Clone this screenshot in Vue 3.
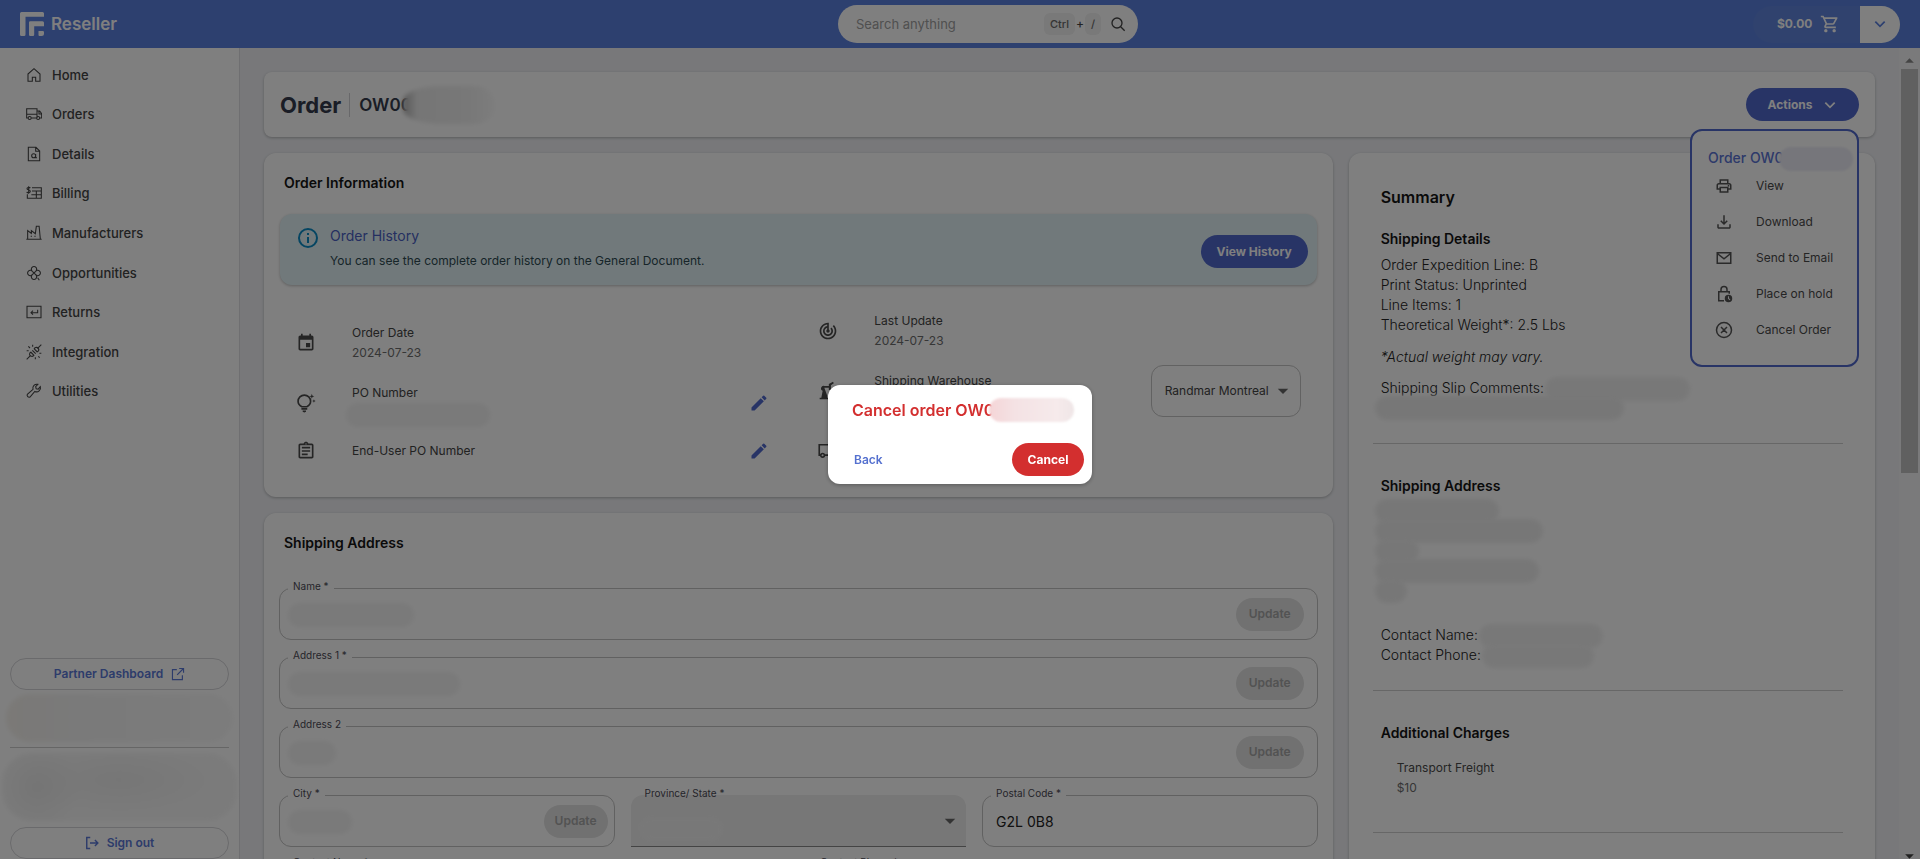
<script setup>
import { h, ref } from 'vue'

const fills = {
  event: 'M17 12h-5v5h5v-5zM16 1v2H8V1H6v2H5c-1.11 0-1.99.9-1.99 2L3 19c0 1.1.89 2 2 2h14c1.1 0 2-.9 2-2V5c0-1.1-.9-2-2-2h-1V1h-2zm3 18H5V8h14v11z',
  edit: 'M3 17.25V21h3.75L17.81 9.94l-3.75-3.75L3 17.25zM20.71 7.04c.39-.39.39-1.02 0-1.41l-2.34-2.34a1 1 0 0 0-1.41 0l-1.83 1.83 3.75 3.75 1.83-1.83z',
  clipboard: 'M7 15h7v2H7zm0-4h10v2H7zm0-4h10v2H7zM19 3h-4.18C14.4 1.84 13.3 1 12 1s-2.4.84-2.82 2H5c-1.1 0-2 .9-2 2v14c0 1.1.9 2 2 2h14c1.1 0 2-.9 2-2V5c0-1.1-.9-2-2-2zm-7-.25c.41 0 .75.34.75.75s-.34.75-.75.75-.75-.34-.75-.75.34-.75.75-.75zM19 19H5V5h14v14z',
  track: 'M19.07 4.93l-1.41 1.41C19.1 7.79 20 9.79 20 12c0 4.42-3.58 8-8 8s-8-3.58-8-8c0-4.08 3.05-7.44 7-7.93v2.02C8.16 6.57 6 9.03 6 12c0 3.31 2.69 6 6 6s6-2.69 6-6c0-1.66-.67-3.16-1.76-4.24l-1.41 1.41C15.55 9.9 16 10.9 16 12c0 2.21-1.79 4-4 4s-4-1.79-4-4c0-1.86 1.28-3.41 3-3.86v2.14c-.6.35-1 .98-1 1.72 0 1.1.9 2 2 2s2-.9 2-2c0-.74-.4-1.38-1-1.72V2h-1C6.48 2 2 6.48 2 12s4.48 10 10 10 10-4.48 10-10c0-2.76-1.12-5.26-2.93-7.07z',
  print: 'M19 8h-1V3H6v5H5c-1.66 0-3 1.34-3 3v6h4v4h12v-4h4v-6c0-1.66-1.34-3-3-3zM8 5h8v3H8V5zm8 12v2H8v-4h8v2zm2-2v-2H6v2H4v-4c0-.55.45-1 1-1h14c.55 0 1 .45 1 1v4h-2zM17 10.5h2v2h-2z',
  download: 'M19 15v4H5v-4H3v4c0 1.1.9 2 2 2h14c1.1 0 2-.9 2-2v-4h-2zM17 11l-1.41-1.41L13 12.17V3h-2v9.17L8.41 9.59 7 11l5 5 5-5z',
  cart: 'M15.55 13c.75 0 1.41-.41 1.75-1.03l3.58-6.49A1 1 0 0 0 20.01 4H5.21l-.94-2H1v2h2l3.6 7.59-1.35 2.44C4.52 15.37 5.48 17 7 17h12v-2H7l1.1-2h7.45zM6.16 6h12.15l-2.76 5H8.53L6.16 6zM7 18c-1.1 0-1.99.9-1.99 2S5.9 22 7 22s2-.9 2-2-.9-2-2-2zm10 0c-1.1 0-1.99.9-1.99 2s.89 2 1.99 2 2-.9 2-2-.9-2-2-2z',
  robot: 'M2 22v-2h2l1.6-8.3A3 3 0 1 1 7.8 6H13v2H7.6l3.4 9.5V20h2v2H2zM13 3.5l5-2.5 1 1.8L15.500 5v4L19 11.200l-1 1.800-5-2.500z',
  bulb: 'M6.500 18h7v2h-7zM8 21h4v1.500l-2 1-2-1zM19 1l.8 2.200L22 4l-2.200.8L19 7l-.8-2.200L16 4l2.200-.8zM21.500 7.500l.6 1.500 1.500.6-1.500.6-.6 1.500-.6-1.500-1.500-.6 1.500-.6z',
  lock: 'M18 13a5 5 0 1 0 0 10 5 5 0 0 0 0-10zm1.700 7.200-2.400-2V15h1.300v2.600l1.900 1.600z',
  caret: 'M5 9h14l-7 7z',
  up: 'M4 16h16l-8-8z',
  info: 'M11 7h2v2h-2zm0 4h2v6h-2z',
  logo: 'M1.500 0H22.500A1.500 1.500 0 0 1 24 1.500V4.700H5.500V22.500A1.500 1.500 0 0 1 4 24H1.500A1.500 1.500 0 0 1 0 22.500V1.500A1.500 1.500 0 0 1 1.500 0zM10.300 9.300H22.500A1.500 1.500 0 0 1 24 10.800V14.200H14.200V22.800A1.200 1.200 0 0 1 13 24H10.200A1.200 1.200 0 0 1 9 22.800V10.600A1.300 1.300 0 0 1 10.300 9.300zM18.500 19H22.800A1.200 1.200 0 0 1 24 20.200V21.500A2.500 2.500 0 0 1 21.500 24H19.500A1 1 0 0 1 18.500 23z'
}
const strokes = {
  home: 'M3 10.500 12 2.500l9 8V21.500h-6.500v-6h-5v6H3z',
  van: 'M4 17H1.500V4.500h14V17H8M15.500 8.500h4l3 4V17H21M5.500 15a2.200 2.200 0 1 0 0 4.400 2.200 2.200 0 0 0 0-4.400zM18.200 15a2.200 2.200 0 1 0 0 4.400 2.200 2.200 0 0 0 0-4.400zM15.500 17h1',
  truck: 'M3 18H1V4h15.500v14M8 18h8M1 12.500h15.500M16.500 7.500h4l3 4V18H21M19.500 8v4h4M5.500 15.700a2.300 2.300 0 1 0 0 4.600 2.300 2.300 0 0 0 0-4.600zM18.200 15.700a2.300 2.300 0 1 0 0 4.600 2.300 2.300 0 0 0 0-4.600z',
  details: 'M3.500 2h11.500l5.500 5.500V22H3.500zM14.500 2.500v5.500h5.500M11.500 11.500a3 3 0 1 0 0 6 3 3 0 0 0 0-6zM14.500 12v5.500h2',
  billing: 'M9 4h14v16H2v-6M9 9h14M8 14.500h15M15.500 9v11M6.500 4.500C5 3 1.500 3.500 1.500 5.500S6.500 7 6.500 9.500 2.500 12 1 10.500M4 2v11',
  factory: 'M.5 21.500h23M2.500 21V8.500l5.500 4v-4l6 4.500L15.500 2h4.200l1.800 19M7 17h2M12.500 17h2',
  clover: 'M9.500 9.500A4 4 0 1 1 14.500 9.500 4 4 0 1 1 14.500 14.500 4 4 0 1 1 9.500 14.500 4 4 0 1 1 9.500 9.500L14.500 14.500M14.500 9.500L9.500 14.500M17.500 19l2.500 4',
  returns: 'M1.500 3.500h21v17h-21zM17.500 8.500V13H7.500M10.500 10l-3 3 3 3',
  plug: 'M1 23l6-6M17 7l6-6M7 12l5 5M12 7l5 5M9.500 9.500l5 5M7 12c-2.500 2.500-2 5 0 6s4 .5 5.500-1.500M12 7c2-2.500 5-2.500 6.500-.5s.5 4-1.500 5.500M6 6 3.500 3.500M10 4V1M1 10h3M14 20v3M20 14h3M18.500 18.500l2 2',
  wrench: 'M21.500 5.500a6 6 0 0 1-8.300 7.200L6 21a3 3 0 0 1-4-4l8.500-7.500a6 6 0 0 1 7.300-7.500L14.500 5.500l.8 3.200 3 .6z',
  external: 'M10 4.500H2.500v17h17V14M14 2.500h7.500V10M21 3 10.500 13.500',
  signout: 'M9 2.500H3v19h6M8.500 12H22M17 7l5 5-5 5',
  search: 'M10.500 3a7.500 7.500 0 1 0 0 15 7.500 7.500 0 0 0 0-15zM16 16l6 6',
  chevron: 'M4 8l8 8 8-8',
  info: 'M12 3a9 9 0 1 0 0 18 9 9 0 0 0 0-18z',
  mail: 'M3 5h18v14H3zM3 6l9 7 9-7',
  lock: 'M12 21H5V9h14v2.500M8 9V6a4 4 0 0 1 8 0v3',
  cancel: 'M12 2a10 10 0 1 0 0 20 10 10 0 0 0 0-20zM8 8l8 8M16 8l-8 8',
  bulb: 'M7 16.500C4 15 2.500 12.500 2.500 10a7.500 7.500 0 0 1 15 0c0 2.500-1.500 5-4.500 6.500z'
}
const Icon = (p) => h('svg', { viewBox: '0 0 24 24', class: 'icon', 'aria-hidden': 'true' }, [
  fills[p.name] && h('path', { d: fills[p.name], fill: 'currentColor', 'fill-rule': 'evenodd' }),
  strokes[p.name] && h('path', { d: strokes[p.name], fill: 'none', stroke: 'currentColor', 'stroke-width': p.w || 2 })
])
Icon.props = ['name', 'w']

const nav = [
  ['home', 'Home'], ['truck', 'Orders'], ['details', 'Details'], ['billing', 'Billing'],
  ['factory', 'Manufacturers'], ['clover', 'Opportunities'], ['returns', 'Returns'],
  ['plug', 'Integration'], ['wrench', 'Utilities']
]
const menu = [
  ['print', 'View'], ['download', 'Download'], ['mail', 'Send to Email'],
  ['lock', 'Place on hold'], ['cancel', 'Cancel Order']
]
const lines = [
  { id: 'name', label: 'Name *', size: 'w126' },
  { id: 'address1', label: 'Address 1 *', size: 'w172' },
  { id: 'address2', label: 'Address 2', size: 'w48' }
]
const postal = ref('G2L 0B8')
</script>

<template>
  <div class="app">
    <header class="topbar">
      <a class="brand" href="#"><Icon name="logo" /><span>Reseller</span></a>
      <form class="search" role="search" @submit.prevent>
        <input type="search" placeholder="Search anything" aria-label="Search anything" />
        <kbd>Ctrl</kbd><span class="plus">+</span><kbd class="slash">/</kbd>
        <button type="button" aria-label="Search"><Icon name="search" /></button>
      </form>
      <div class="cart">
        <button type="button" class="total">$0.00 <Icon name="cart" /></button>
        <button type="button" class="more" aria-label="Cart options"><Icon name="chevron" w="3" /></button>
      </div>
    </header>

    <div class="body">
      <aside class="sidebar">
        <nav>
          <a v-for="[icon, label] in nav" :key="label" href="#"><Icon :name="icon" w="1.6" />{{ label }}</a>
        </nav>
        <div class="side-foot">
          <button type="button" class="outline">Partner Dashboard <Icon name="external" /></button>
          <span class="smudge side-a"></span>
          <hr />
          <span class="smudge side-b"></span>
          <button type="button" class="outline"><Icon name="signout" w="2.500" /> Sign out</button>
        </div>
      </aside>

      <main class="content">
        <section class="card title-card">
          <h1>Order</h1>
          <span class="order-no">OW00<span class="smudge title-smudge"></span></span>
          <div class="actions">
            <button type="button" class="pill primary">Actions <Icon name="chevron" w="3" /></button>
            <div class="menu">
              <h3>Order OW0<span class="smudge menu-smudge"></span></h3>
              <ul>
                <li v-for="[icon, label] in menu" :key="label">
                  <button type="button"><Icon :name="icon" />{{ label }}</button>
                </li>
              </ul>
            </div>
          </div>
        </section>

        <div class="left">
          <section class="card info">
            <h2>Order Information</h2>
            <div class="alert">
              <Icon name="info" />
              <div>
                <strong>Order History</strong>
                <p>You can see the complete order history on the General Document.</p>
              </div>
              <button type="button" class="pill primary history">View History</button>
            </div>
            <div class="facts">
              <ul>
                <li>
                  <Icon name="event" />
                  <div>Order Date<small>2024-07-23</small></div>
                </li>
                <li>
                  <Icon name="bulb" />
                  <div>PO Number<small><span class="smudge po"></span></small></div>
                  <button type="button" aria-label="Edit PO Number"><Icon name="edit" /></button>
                </li>
                <li class="short">
                  <Icon name="clipboard" />
                  <div>End-User PO Number</div>
                  <button type="button" aria-label="Edit End-User PO Number"><Icon name="edit" /></button>
                </li>
              </ul>
              <ul>
                <li>
                  <Icon name="track" />
                  <div>Last Update<small>2024-07-23</small></div>
                </li>
                <li>
                  <Icon name="robot" />
                  <div><label for="warehouse">Shipping Warehouse</label><small>&nbsp;</small></div>
                  <span class="select warehouse">
                    <select id="warehouse"><option>Randmar Montreal</option></select>
                    <Icon name="caret" />
                  </span>
                </li>
                <li>
                  <Icon name="van" />
                </li>
              </ul>
            </div>
          </section>

          <section class="card address">
            <h2>Shipping Address</h2>
            <div class="fields">
              <div v-for="f in lines" :key="f.id" class="field full">
                <label :for="f.id">{{ f.label }}</label>
                <input :id="f.id" type="text" />
                <span class="smudge over" :class="f.size"></span>
                <button type="button" class="pill update" disabled>Update</button>
              </div>
              <div class="field third city">
                <label for="city">City *</label>
                <input id="city" type="text" />
                <span class="smudge over w64"></span>
                <button type="button" class="pill update" disabled>Update</button>
              </div>
              <div class="field third filled">
                <label for="state">Province/ State *</label>
                <span class="select">
                  <select id="state"><option></option></select>
                  <Icon name="caret" />
                </span>
                <span class="smudge over state-smudge"></span>
              </div>
              <div class="field third">
                <label for="postal">Postal Code *</label>
                <input id="postal" v-model="postal" type="text" />
              </div>
              <div class="field half">
                <label for="cname">Contact Name *</label>
                <input id="cname" type="text" />
              </div>
              <div class="field half">
                <label for="cphone">Contact Phone *</label>
                <input id="cphone" type="text" />
              </div>
            </div>
          </section>
        </div>

        <section class="card summary">
          <div class="block first">
            <h2>Summary</h2>
            <h3>Shipping Details</h3>
            <p>Order Expedition Line: B<br />Print Status: Unprinted<br />Line Items: 1<br />Theoretical Weight*: 2.5 Lbs</p>
            <p class="note"><em>*Actual weight may vary.</em></p>
            <p class="slip">Shipping Slip Comments:<span class="smudge value w145"></span><br /><span class="smudge line w249"></span></p>
          </div>
          <div class="block ship">
            <h3>Shipping Address</h3>
            <div class="lines">
              <span class="smudge line w124"></span>
              <span class="smudge line w168"></span>
              <span class="smudge line w44"></span>
              <span class="smudge line w164"></span>
              <span class="smudge line w32"></span>
            </div>
            <p>Contact Name:<span class="smudge value w124"></span><br />Contact Phone:<span class="smudge value w112"></span></p>
          </div>
          <div class="block charges">
            <h3>Additional Charges</h3>
            <dl><dt>Transport Freight</dt><dd>$10</dd></dl>
          </div>
        </section>
      </main>

      <div class="scrollbar" aria-hidden="true">
        <Icon name="up" />
        <span class="thumb"></span>
        <Icon name="up" class="down" />
      </div>
    </div>

    <div class="backdrop">
      <div class="dialog" role="dialog" aria-modal="true" aria-labelledby="dlg">
        <h2 id="dlg">Cancel order OW0<span class="smudge dialog-smudge"></span></h2>
        <div class="dialog-actions">
          <button type="button" class="back">Back</button>
          <button type="button" class="pill danger">Cancel</button>
        </div>
      </div>
    </div>
  </div>
</template>

<style>
body { overflow: hidden; }
</style>

<style scoped>
* { box-sizing: border-box; margin: 0; padding: 0; }
.app { height: 100vh; display: flex; flex-direction: column; font-family: Inter, "Liberation Sans", sans-serif; font-size: 12px; line-height: 20px; color: #222; }
button, input, select { font: inherit; color: inherit; border: 0; background: none; outline: 0; }
select { appearance: none; }
ul { list-style: none; }
a { color: inherit; text-decoration: none; }
.icon { width: 20px; height: 20px; flex: none; display: block; }

.topbar { height: 48px; flex: none; background: #5b80df; display: grid; grid-template-columns: 1fr 300px 1fr; align-items: center; padding: 0 20px 0 76px; }
.brand { display: flex; align-items: center; gap: 7px; color: #fff; font-size: 17px; font-weight: 600; margin-left: -56px; }
.brand .icon { width: 24px; height: 24px; }
.search { height: 38px; border-radius: 19px; background: #fff; display: flex; align-items: center; padding: 0 12px 0 18px; }
.search input { flex: 1; min-width: 0; font-size: 13px; }
.search input::placeholder { color: #a0a0a0; opacity: 1; }
.search kbd { font: inherit; font-size: 11px; font-weight: 500; line-height: 22px; padding: 0 6px; border-radius: 6px; background: #f2f2f2; color: #6a6a6a; }
.search .plus { padding: 0 1px; color: #444; font-weight: 500; }
.search button { margin-left: 9px; color: #444; }
.search button .icon { width: 16px; height: 16px; }
.cart { justify-self: end; display: flex; height: 37px; border-radius: 19px; overflow: hidden; background: #6084dc; }
.total { width: 107px; padding-left: 24px; display: flex; align-items: center; gap: 8px; color: #fff; font-weight: 700; }
.more { width: 40px; background: #fff; color: #5b80df; display: grid; place-items: center; }
.more .icon { width: 14px; height: 14px; }

.body { flex: 1; min-height: 0; display: flex; background: #f0f1f5; }
.sidebar { width: 240px; flex: none; background: #fff; border-right: 1px solid #dfdfe2; display: flex; flex-direction: column; justify-content: space-between; }
.sidebar nav { height: 356px; margin-top: 7px; display: grid; grid-auto-rows: 1fr; font-size: 13px; }
.sidebar nav a { display: flex; align-items: center; padding-left: 26px; gap: 10px; color: #444; font-weight: 500; }
.sidebar nav .icon { width: 16px; height: 16px; }
.side-foot { padding: 0 10px; display: flex; flex-direction: column; }
.outline { height: 32px; border: 1px solid #d4d4d8; border-radius: 16px; color: #5b78d6; font-weight: 600; display: flex; align-items: center; justify-content: center; gap: 8px; }
.outline .icon { width: 14px; height: 14px; }
hr { border: 0; border-top: 1px solid #ccc; }

.smudge { display: block; height: 24px; border-radius: 12px; background: #f4f4f4; filter: blur(2px); }
.side-a { height: 48px; margin: 4px -4px 5px; border-radius: 24px; background: linear-gradient(90deg, #f6f3ee, #f4f4f4 30%, #f9f9f9); }
.side-b { height: 68px; margin: 5px -8px 6px; border-radius: 30px; background: radial-gradient(circle at 15% 50%, #eaeaea, transparent 22%), radial-gradient(ellipse at 50% 40%, #ededed, #f7f7f7 60%); }

.content { flex: 1; min-width: 0; overflow: hidden; padding: 24px; display: grid; grid-template-columns: repeat(12, 1fr); grid-template-rows: 65px auto; gap: 16px; align-items: start; }
.card { background: #fff; border-radius: 12px; box-shadow: 0 1px 3px rgba(0, 0, 0, .25); min-width: 0; }
.title-card { grid-column: span 12; height: 65px; border-radius: 8px; padding: 0 16px; display: flex; align-items: center; position: relative; z-index: 1; color: #343b4c; }
h1 { font-size: 22px; font-weight: 700; line-height: 24px; padding-right: 8px; border-right: 1px solid #d0d0d4; }
.order-no { font-size: 17px; font-weight: 600; padding-left: 9px; display: flex; align-items: center; }
.title-smudge { width: 92px; height: 38px; margin-left: -9px; border-radius: 50% 24px 24px 50%; background: linear-gradient(90deg, #b0b0b0, #ececec 15%, #f0f0f0 70%, #fafafa); }
.actions { margin-left: auto; position: relative; }
.pill { height: 33px; border-radius: 17px; font-weight: 700; }
.primary { background: #5068cc; color: #fff; }
.actions > .pill { width: 113px; display: flex; align-items: center; justify-content: center; gap: 11px; }
.actions > .pill .icon { width: 14px; height: 14px; }
.menu { position: absolute; right: 0; top: 41px; width: 169px; padding: 17px 16px 16px; background: #fff; border: 2px solid #5068cc; border-radius: 12px; }
.menu h3 { font-size: 14px; font-weight: 500; color: #5b74d4; display: flex; white-space: nowrap; }
.menu-smudge { flex: none; width: 74px; margin: -1px -12px -3px -5px; background: #ececf6; filter: blur(1px); }
.menu li button { height: 36px; display: flex; align-items: center; gap: 23px; padding-left: 7px; color: #4a4a4a; white-space: nowrap; }
.menu .icon { width: 18px; height: 18px; color: #555; }
.menu ul { padding-bottom: 1px; }

.left { grid-column: span 8; display: flex; flex-direction: column; gap: 16px; min-width: 0; }
.info, .address { padding: 20px 16px 16px; }
h2, .summary h3 { font-size: 14px; font-weight: 600; line-height: 20px; color: #151515; }
.left h2 { padding-left: 4px; }
.alert { margin-top: 21px; padding: 12px 9px 14px 16px; border-radius: 12px; background: #e2f3f7; box-shadow: 0 1px 3px rgba(0, 0, 0, .25); display: flex; }
.alert > .icon { width: 24px; height: 24px; color: #0b8ac4; margin-right: 10px; }
.alert strong { display: block; font-size: 14px; font-weight: 400; color: #4a5fc2; }
.alert p { margin-top: 5px; color: #2f4a52; }
.history { margin: 9px 0 0 auto; width: 107px; height: 33px; }
.facts { margin-top: 16px; display: grid; grid-template-columns: 1fr 1fr; column-gap: 8px; align-items: center; }
.facts li { height: 60px; display: flex; align-items: center; padding-left: 16px; color: #444; }
.facts li.short { height: 36px; }
.facts li > .icon { margin-right: 36px; color: #4a4a4a; }
.facts small { display: block; height: 20px; font-size: 12px; color: #6d6d6d; }
.facts li > button { margin-left: auto; margin-right: 25px; color: #5068cc; }
.po { width: 144px; margin-left: -6px; }
.select { display: flex; align-items: center; }
.select .icon { width: 18px; height: 18px; pointer-events: none; color: #666; }
.warehouse { margin-left: auto; width: 150px; height: 52px; margin-right: 16px; border: 1px solid #c4c4c4; border-radius: 12px; flex: none; }
.warehouse select { width: 148px; height: 50px; padding: 0 24px 0 13px; }
.warehouse .icon { margin-left: -26px; }

.fields { margin: 35px -1px 0; display: grid; grid-template-columns: repeat(6, 1fr); gap: 17px 16px; }
.field { height: 52px; border: 1px solid #c2c2c2; border-radius: 12px; display: flex; align-items: center; padding: 0 13px; position: relative; min-width: 0; }
.field label { position: absolute; left: 8px; top: -10px; padding: 0 5px; background: #fff; font-size: 10px; line-height: 14px; color: #4c4a55; }
.field input { flex: 1; min-width: 0; font-size: 14px; height: 40px; }
.full { grid-column: span 6; }
.third { grid-column: span 2; }
.half { grid-column: span 3; }
.over { position: absolute; left: 8px; top: 14px; }
.update { width: 68px; background: #e2e2e2; color: #a6a6a6; font-weight: 600; }
.city { padding-right: 6px; }
.city .update { width: 64px; }
.filled { border: 0; border-bottom: 1px solid #888; background: #efefef; border-radius: 12px 12px 0 0; padding: 0; }
.filled label { background: none; left: 9px; top: -9px; }
.filled .select { width: 100%; }
.filled select { flex: 1; height: 50px; padding-left: 14px; }
.filled .icon { margin: 0 7px 0 -25px; }
.state-smudge { top: 22px; width: 84px; background: #f1f1f1; }

.summary { grid-column: span 4; padding: 32px 32px 0 24px; font-size: 14px; font-weight: 300; min-height: 900px; }
.block { padding: 32px 8px 0; border-bottom: 1px solid #cfcfcf; }
.summary h2 { font-size: 16px; line-height: 24px; }
.first { padding-top: 0; padding-bottom: 25px; }
.first h3 { margin: 20px 0 6px; }
.note { margin-top: 12px; }
.slip { margin-top: 11px; }
.value { display: inline-block; vertical-align: middle; margin: -4px 0 -4px 1px; background: #f1f1f1; }
.line { margin: -2px 0 -2px -6px; background: #efefef; }
.ship { padding-bottom: 25px; }
.lines { padding: 5px 0 24px; display: flex; flex-direction: column; }
.charges { padding-bottom: 34px; }
.charges dl { margin-top: 15px; padding-left: 16px; font-size: 12px; font-weight: 400; color: #4a4a4a; }
.charges dd { color: #6d6d6d; }
.w32 { width: 32px; } .w44 { width: 44px; } .w48 { width: 48px; } .w64 { width: 64px; }
.w112 { width: 112px; } .w124 { width: 124px; } .w126 { width: 126px; } .w145 { width: 145px; }
.w164 { width: 164px; } .w168 { width: 168px; } .w172 { width: 172px; } .w249 { width: 249px; }

.scrollbar { width: 21px; flex: none; background: #f5f5f6; display: flex; flex-direction: column; align-items: center; padding-top: 4px; }
.scrollbar .icon { width: 13px; height: 17px; color: #888; }
.scrollbar .down { margin-top: auto; transform: rotate(180deg); color: #444; margin-bottom: -6px; }
.thumb { width: 17px; height: 50%; background: #c1c1c1; }

.backdrop { position: fixed; inset: 0; z-index: 10; background: rgba(0, 0, 0, .5); display: grid; place-items: center; padding-top: 10px; }
.dialog { width: 264px; background: #fff; border-radius: 12px; padding: 13px 8px 8px 24px; box-shadow: 0 1px 4px rgba(0, 0, 0, .3); }
.dialog h2 { font-size: 16px; line-height: 24px; font-weight: 600; color: #d32f2f; display: flex; white-space: nowrap; }
.dialog-smudge { flex: none; width: 85px; margin-left: -5px; background: linear-gradient(90deg, #f5d5d7, #f4e2e4 30%, #f6eaeb 80%, #efe6e7); filter: blur(1px); }
.dialog-actions { margin-top: 21px; display: flex; justify-content: space-between; align-items: center; }
.back { color: #5470cf; font-weight: 600; padding-left: 2px; }
.danger { width: 72px; background: #d32f2f; color: #fff; }
</style>
